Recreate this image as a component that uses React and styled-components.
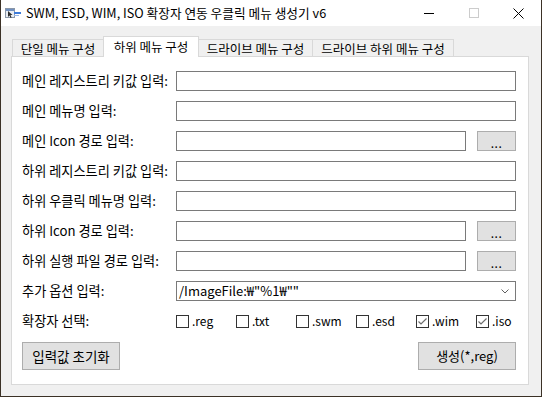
import React from "react";
import styled, { createGlobalStyle } from "styled-components";

const Global = createGlobalStyle`
  html, body { margin: 0; padding: 0; background: #ffffff; }
  * { box-sizing: border-box; }
`;

const FONT = `"Noto Sans CJK KR", "Noto Sans", sans-serif`;

const Window = styled.div`
  width: 542px;
  height: 397px;
  border: 1px solid #3b3126;
  border-top: none;
  display: flex;
  flex-direction: column;
  background: #f0f0f0;
  font-family: ${FONT};
  font-size: 12px;
  color: #000;
`;

const TitleBar = styled.div`
  height: 26px;
  background: #ffffff;
  display: flex;
  align-items: center;
  padding-left: 4px;
`;

const TitleText = styled.div`
  margin-left: 5px;
  font-size: 12.7px;
  line-height: 16px;
  white-space: nowrap;
`;

const Controls = styled.div`
  margin-left: auto;
  display: flex;
  height: 100%;
`;

const ControlButton = styled.div`
  width: 45px;
  height: 100%;
  display: flex;
  align-items: center;
  justify-content: center;
`;

const Body = styled.div`
  flex: 1;
  display: flex;
  flex-direction: column;
  padding: 11px 12px 11px 10px;
`;

const TabStrip = styled.div`
  display: flex;
  align-items: flex-end;
  height: 19px;
  padding-left: 1px;
`;

const Tab = styled.div`
  position: relative;
  width: ${(p) => p.$w}px;
  height: ${(p) => (p.$active ? 21 : 17)}px;
  margin-bottom: ${(p) => (p.$active ? -1 : 0)}px;
  margin-right: -1px;
  z-index: ${(p) => (p.$active ? 1 : 0)};
  background: ${(p) => (p.$active ? "#ffffff" : "#f0f0f0")};
  border: 1px solid #d9d9d9;
  border-bottom: none;
  display: flex;
  align-items: center;
  justify-content: center;
  padding-top: ${(p) => (p.$active ? 0 : 1)}px;
  white-space: nowrap;
  font-size: 12.5px;
  line-height: 14px;
`;

const Panel = styled.div`
  flex: 1;
  background: #ffffff;
  border: 1px solid #d9d9d9;
  display: flex;
  flex-direction: column;
  padding: 14px 12px 0 10px;
`;

const Form = styled.div`
  display: flex;
  flex-direction: column;
  gap: 10px;
`;

const Row = styled.div`
  display: flex;
  align-items: center;
  height: 20px;
`;

const Label = styled.div`
  width: 154px;
  flex: none;
  white-space: nowrap;
  font-size: 13.2px;
  line-height: 16px;
`;

const TextInput = styled.div`
  flex: 1;
  height: 20px;
  border: 1px solid #7a7a7a;
  background: #ffffff;
`;

const BrowseButton = styled.div`
  width: 39px;
  height: 20px;
  margin-left: 11px;
  flex: none;
  background: #e1e1e1;
  border: 1px solid #adadad;
  display: flex;
  align-items: center;
  justify-content: center;
  font-size: 12px;
  line-height: 12px;
  padding-top: 3px;
  letter-spacing: 0.5px;
`;

const Combo = styled.div`
  flex: 1;
  height: 20px;
  border: 1px solid #7a7a7a;
  background: #ffffff;
  display: flex;
  align-items: center;
  padding: 0 6px 0 2px;
`;

const ComboText = styled.span`
  flex: 1;
  white-space: nowrap;
  font-size: 13px;
  line-height: 16px;
`;

const Checks = styled.div`
  display: flex;
`;

const CheckItem = styled.div`
  width: 60px;
  display: flex;
  align-items: center;
`;

const Box = styled.div`
  width: 13px;
  height: 13px;
  border: 1px solid #333333;
  background: #ffffff;
  display: flex;
  align-items: center;
  justify-content: center;
  margin-right: 3px;
  flex: none;
`;

const CheckText = styled.span`
  line-height: 16px;
  white-space: nowrap;
`;

const ButtonRow = styled.div`
  display: flex;
  justify-content: space-between;
  margin-top: 11px;
`;

const PushButton = styled.div`
  width: 98px;
  height: 28px;
  background: #e1e1e1;
  border: 1px solid #adadad;
  display: flex;
  align-items: center;
  justify-content: center;
  white-space: nowrap;
  font-size: ${(p) => (p.$compact ? 13 : 13.5)}px;
  line-height: 16px;
`;

const AppIcon = () => (
  <svg width="16" height="14" viewBox="0 0 16 14">
    <rect x="0.5" y="2.5" width="9" height="9" fill="#e8ecf2" stroke="#8a97a8" />
    <rect x="1" y="3" width="8" height="2" fill="#6f8fc0" />
    <path d="M3 5 L3 11 L4.5 9.5 L5.6 12 L6.6 11.5 L5.5 9 L7.5 9 Z" fill="#2b2b2b" />
    <rect x="9" y="6" width="7" height="2" fill="#3d7bd9" />
    <rect x="9" y="9" width="5" height="1" fill="#9ab6e4" />
  </svg>
);

const MinIcon = () => (
  <svg width="10" height="10" viewBox="0 0 10 10">
    <line x1="0" y1="5.5" x2="10" y2="5.5" stroke="#000" strokeWidth="1" />
  </svg>
);

const MaxIcon = () => (
  <svg width="10" height="10" viewBox="0 0 10 10">
    <rect x="0.5" y="0.5" width="9" height="9" fill="none" stroke="#cccccc" strokeWidth="1" />
  </svg>
);

const CloseIcon = () => (
  <svg width="11" height="11" viewBox="0 0 11 11">
    <path d="M0.5 0.5 L10.5 10.5 M10.5 0.5 L0.5 10.5" stroke="#000" strokeWidth="1" />
  </svg>
);

const CheckMark = () => (
  <svg width="11" height="11" viewBox="0 0 11 11">
    <path d="M1.5 5.5 L4 8 L9.5 2.5" fill="none" stroke="#6e6e6e" strokeWidth="1.2" />
  </svg>
);

const Chevron = () => (
  <svg width="8" height="5" viewBox="0 0 8 5">
    <path d="M0.5 0.5 L4 4 L7.5 0.5" fill="none" stroke="#606060" strokeWidth="1" />
  </svg>
);

const tabs = [
  { label: "단일 메뉴 구성", w: 92 },
  { label: "하위 메뉴 구성", w: 96, active: true },
  { label: "드라이브 메뉴 구성", w: 115 },
  { label: "드라이브 하위 메뉴 구성", w: 142 },
];

const rows = [
  { label: "메인 레지스트리 키값 입력:" },
  { label: "메인 메뉴명 입력:" },
  { label: "메인 Icon 경로 입력:", browse: true },
  { label: "하위 레지스트리 키값 입력:" },
  { label: "하위 우클릭 메뉴명 입력:" },
  { label: "하위 Icon 경로 입력:", browse: true },
  { label: "하위 실행 파일 경로 입력:", browse: true },
];

const exts = [
  { name: ".reg", checked: false },
  { name: ".txt", checked: false },
  { name: ".swm", checked: false },
  { name: ".esd", checked: false },
  { name: ".wim", checked: true },
  { name: ".iso", checked: true },
];

export default function App() {
  return (
    <>
      <Global />
      <Window>
        <TitleBar>
          <AppIcon />
          <TitleText>SWM, ESD, WIM, ISO 확장자 연동 우클릭 메뉴 생성기 v6</TitleText>
          <Controls>
            <ControlButton><MinIcon /></ControlButton>
            <ControlButton><MaxIcon /></ControlButton>
            <ControlButton><CloseIcon /></ControlButton>
          </Controls>
        </TitleBar>
        <Body>
          <TabStrip>
            {tabs.map((t) => (
              <Tab key={t.label} $w={t.w} $active={t.active}>
                {t.label}
              </Tab>
            ))}
          </TabStrip>
          <Panel>
            <Form>
              {rows.map((r) => (
                <Row key={r.label}>
                  <Label>{r.label}</Label>
                  <TextInput />
                  {r.browse && <BrowseButton>...</BrowseButton>}
                </Row>
              ))}
              <Row>
                <Label>추가 옵션 입력:</Label>
                <Combo>
                  <ComboText>/ImageFile:₩"%1₩""</ComboText>
                  <Chevron />
                </Combo>
              </Row>
              <Row>
                <Label>확장자 선택:</Label>
                <Checks>
                  {exts.map((e) => (
                    <CheckItem key={e.name}>
                      <Box>{e.checked && <CheckMark />}</Box>
                      <CheckText>{e.name}</CheckText>
                    </CheckItem>
                  ))}
                </Checks>
              </Row>
            </Form>
            <ButtonRow>
              <PushButton>입력값 초기화</PushButton>
              <PushButton $compact>생성(*,reg)</PushButton>
            </ButtonRow>
          </Panel>
        </Body>
      </Window>
    </>
  );
}
